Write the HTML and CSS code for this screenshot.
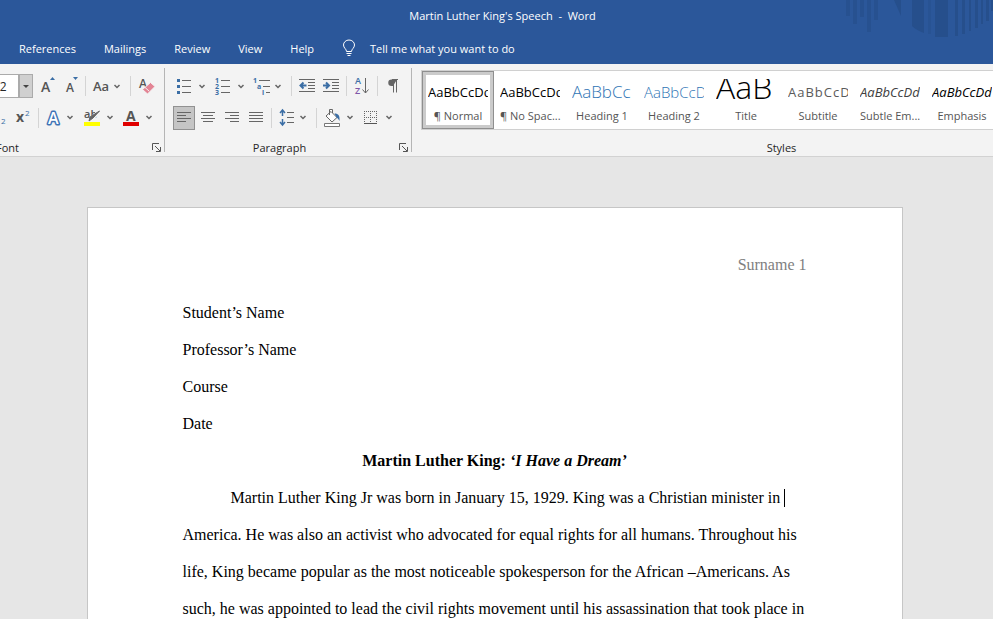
FILE: index.html
```html
<!DOCTYPE html>
<html lang="en">
<head>
    <meta charset="UTF-8">
    <meta name="viewport" content="width=device-width, initial-scale=1.0">
    <title>Martin Luther King's Speech - Word</title>
    <link rel="stylesheet" href="styles.css">
</head>
<body>
    <header class="title-bar">
        <svg class="title-art" width="150" height="40" viewBox="0 0 150 40" aria-hidden="true">
            <g fill="#264f8c">
                <path d="M3 0h4v16H3zM10 0h4v24h-4zM17 0h4v17h-4zM24 0h4v32h-4zM31 0h4v20h-4z" opacity=".7"/>
                <path d="M51 0h7v16z"/>
                <path d="M69 0h12v33q-8-3-12-7z"/>
                <path d="M85 0h3v34h-3z" opacity=".5"/>
                <path d="M92 0h13v37H92z"/>
                <path d="M112 0h3v36h-3zM119 0h3v34h-3zM126 0h2v31h-2zM132 0h3v28h-3zM138 0h2v24h-2zM143 0h3v21h-3zM148 0h2v11h-2z"/>
            </g>
        </svg>
        <div class="window-title">Martin Luther King's Speech&nbsp; -&nbsp; Word</div>
        <nav class="tabs">
            <a href="#">References</a>
            <a href="#">Mailings</a>
            <a href="#">Review</a>
            <a href="#">View</a>
            <a href="#">Help</a>
            <button class="tell-me" type="button">
                <svg width="14" height="18" viewBox="0 0 14 18" fill="none" stroke="#fff">
                    <path d="M4.5 12.500c0-2.500-3-3.500-3-6.500a5.500 5 0 0 1 11 0c0 3-3 4-3 6.500zM4.500 14.500h5M5.500 16.500h3"/>
                </svg>
                Tell me what you want to do
            </button>
        </nav>
    </header>

    <div class="ribbon">
        <section class="group group-font">
            <div class="row">
                <input class="size-input" type="text" value="12" aria-label="Font size">
                <button class="size-arrow" type="button" aria-label="Font size list">
                    <svg width="12" height="22"><path d="M3 10h6l-3 3z" fill="#444"/></svg>
                </button>
                <button class="tool" type="button" aria-label="Grow font">
                    <svg width="24" height="24"><text class="glyph" x="8" y="18" font-size="14">A</text><path d="M17 6l2.500-3 2.500 3z" fill="#3b6ea5"/></svg>
                </button>
                <button class="tool" type="button" aria-label="Shrink font">
                    <svg width="24" height="24"><text class="glyph" x="9" y="18" font-size="12">A</text><path d="M16 3h5l-2.500 3z" fill="#3b6ea5"/></svg>
                </button>
                <span class="sep"></span>
                <button class="tool" type="button" aria-label="Change case">
                    <svg width="36" height="24"><text class="glyph" x="3" y="17" font-size="13">Aa</text><path class="chev" d="M24.500 11l2.500 2.500 2.500-2.500"/></svg>
                </button>
                <span class="sep"></span>
                <button class="tool" type="button" aria-label="Clear formatting">
                    <svg width="24" height="24"><text class="glyph" x="4" y="14" font-size="12">A</text><path d="M15.500 8.500l4.500 4-7.500 7.500-5-4.500z" fill="#e38494" stroke="#f3f3f3"/><path d="M9.500 13l4.500 4" stroke="#f3f3f3"/></svg>
                </button>
            </div>
            <div class="row">
                <button class="tool" type="button" aria-label="Subscript">
                    <svg width="24" height="24"><text class="glyph bold" x="5" y="16" font-size="13">x</text><text x="15" y="18" font-size="8" fill="#3b6ea5">2</text></svg>
                </button>
                <button class="tool" type="button" aria-label="Superscript">
                    <svg width="24" height="24"><text class="glyph bold" x="6" y="16" font-size="14">x</text><text x="15" y="10" font-size="8" fill="#3b6ea5">2</text></svg>
                </button>
                <span class="sep"></span>
                <button class="tool" type="button" aria-label="Text effects">
                    <svg width="36" height="24"><text x="5" y="18" font-size="16" font-weight="600" fill="#fff" stroke="#3f74b5" stroke-width="3" stroke-linejoin="round" paint-order="stroke">A</text><path class="chev" d="M24.500 10l2.500 2.500 2.500-2.500"/></svg>
                </button>
                <button class="tool" type="button" aria-label="Highlight color">
                    <svg width="40" height="24"><text class="glyph" x="5" y="12" font-size="11">ab</text><path d="M20.500 5l-8 8" stroke="#f3f3f3" stroke-width="4"/><path d="M20.500 5l-6.500 7-4 3 1-4z" fill="#666" stroke="#666"/><path d="M5 16h16v4H5z" fill="#ff0"/><path class="chev" d="M28.500 10l2.500 2.500 2.500-2.500"/></svg>
                </button>
                <button class="tool" type="button" aria-label="Font color">
                    <svg width="36" height="24"><text class="glyph bold" x="7" y="15" font-size="14">A</text><path d="M4 16h16v4H4z" fill="#e00000"/><path class="chev" d="M27.500 10l2.500 2.500 2.500-2.500"/></svg>
                </button>
            </div>
            <footer class="group-footer">
                <span>Font</span>
                <button class="launcher" type="button" aria-label="Font settings">
                    <svg width="9" height="9" viewBox="0 0 9 9" fill="none" stroke="#555"><path d="M.5 7V.5H7M3 3l5 5M8.500 4v4.500H4"/></svg>
                </button>
            </footer>
        </section>

        <section class="group group-paragraph">
            <div class="row">
                <button class="tool" type="button" aria-label="Bullets">
                    <svg width="38" height="24"><path d="M4 5h3v3H4zM4 11h3v3H4zM4 17h3v3H4z" fill="#3b6ea5"/><path class="line" d="M9 6.500h9M9 12.500h9M9 18.500h9"/><path class="chev" d="M26.500 11l2.500 2.500 2.500-2.500"/></svg>
                </button>
                <button class="tool" type="button" aria-label="Numbering">
                    <svg width="38" height="24"><g class="tiny"><text x="4" y="9">1</text><text x="4" y="15">2</text><text x="4" y="21">3</text></g><path class="line" d="M10 6.500h9M10 12.500h9M10 18.500h9"/><path class="chev" d="M27.500 11l2.500 2.500 2.500-2.500"/></svg>
                </button>
                <button class="tool" type="button" aria-label="Multilevel list">
                    <svg width="38" height="24"><g class="tiny"><text x="4" y="9">1</text><text x="8" y="15">a</text><text x="13" y="21">i</text></g><path class="line" d="M10 6.500h11M14 12.500h7M17 18.500h4"/><path class="chev" d="M26.500 11l2.500 2.500 2.500-2.500"/></svg>
                </button>
                <span class="sep"></span>
                <button class="tool" type="button" aria-label="Decrease indent">
                    <svg width="23" height="24"><path class="line" d="M3 5.500h16M12 8.500h7M12 11.500h7M12 14.500h7M3 17.500h16"/><path d="M10.500 11.500H5M7.500 8.500l-3 3 3 3" fill="none" stroke="#3b6ea5" stroke-width="2"/></svg>
                </button>
                <button class="tool" type="button" aria-label="Increase indent">
                    <svg width="23" height="24"><path class="line" d="M4 5.500h16M13 8.500h7M13 11.500h7M13 14.500h7M4 17.500h16"/><path d="M4 11.500h6M7 8.500l3 3-3 3" fill="none" stroke="#3b6ea5" stroke-width="2"/></svg>
                </button>
                <span class="sep"></span>
                <button class="tool" type="button" aria-label="Sort">
                    <svg width="22" height="24"><text x="4" y="10" font-size="9" font-weight="600" fill="#3b6ea5">A</text><text x="4" y="20" font-size="9" font-weight="600" fill="#7e57a8">Z</text><path class="line" d="M14.500 4v15M11.500 15.500l3 3.500 3-3.500"/></svg>
                </button>
                <span class="sep"></span>
                <button class="tool" type="button" aria-label="Show paragraph marks">
                    <svg width="24" height="24"><path d="M15 5.500H9.500a3 3 0 0 0 0 6.500H11z" fill="#666"/><path d="M10 5.500h6M11.500 6v12.500M14.500 6v12.500" stroke="#666" fill="none"/></svg>
                </button>
            </div>
            <div class="row">
                <div class="align-set">
                    <button class="tool active" type="button" aria-label="Align left">
                        <svg width="20" height="22"><path class="line" d="M3 5.500h14M3 8.500h9M3 11.500h14M3 14.500h9"/></svg>
                    </button>
                    <button class="tool" type="button" aria-label="Center">
                        <svg width="22" height="24"><path class="line" d="M4 6.500h14M6 9.500h10M4 12.500h14M6 15.500h10"/></svg>
                    </button>
                    <button class="tool" type="button" aria-label="Align right">
                        <svg width="22" height="24"><path class="line" d="M4 6.500h14M9 9.500h9M4 12.500h14M9 15.500h9"/></svg>
                    </button>
                    <button class="tool" type="button" aria-label="Justify">
                        <svg width="22" height="24"><path class="line" d="M4 6.500h14M4 9.500h14M4 12.500h14M4 15.500h14"/></svg>
                    </button>
                </div>
                <span class="sep"></span>
                <button class="tool" type="button" aria-label="Line spacing">
                    <svg width="36" height="24"><path d="M6.500 4v6M6.500 13v6M4 7l2.500-3L9 7M4 16l2.500 3L9 16" fill="none" stroke="#3b6ea5" stroke-width="1.500"/><path class="line" d="M11 6.500h7M11 11.500h7M11 16.500h7"/><path class="chev" d="M24.500 10l2.500 2.500 2.500-2.500"/></svg>
                </button>
                <span class="sep"></span>
                <button class="tool" type="button" aria-label="Shading">
                    <svg width="36" height="24"><path d="M10 5.500l6 6-5 4.500-6-6zM8.500 9V3.500h3V7" fill="#fff" stroke="#666"/><path d="M13.500 7.500c4 0 5.500 2 5 7.500-1-2-2-3-3-3.500z" fill="#3b6ea5"/><path d="M3.500 17.500h15v3h-15z" fill="#fff" stroke="#777"/><path class="chev" d="M26.500 10l2.500 2.500 2.500-2.500"/></svg>
                </button>
                <button class="tool" type="button" aria-label="Borders">
                    <svg width="40" height="24"><path d="M7 5.500h13M7 11.500h13M7.500 5v13M13.500 5v13M19.500 5v13" stroke="#666" stroke-dasharray="1 1"/><path d="M7 17.500h13" stroke="#555"/><path class="chev" d="M29.500 10l2.500 2.500 2.500-2.500"/></svg>
                </button>
            </div>
            <footer class="group-footer">
                <span>Paragraph</span>
                <button class="launcher" type="button" aria-label="Paragraph settings">
                    <svg width="9" height="9" viewBox="0 0 9 9" fill="none" stroke="#555"><path d="M.5 7V.5H7M3 3l5 5M8.500 4v4.500H4"/></svg>
                </button>
            </footer>
        </section>

        <section class="group group-styles">
            <div class="gallery">
                <button class="style-card selected" type="button"><span class="preview">AaBbCcDd</span><span class="style-name">¶ Normal</span></button>
                <button class="style-card" type="button"><span class="preview">AaBbCcDd</span><span class="style-name">¶ No Spac...</span></button>
                <button class="style-card" type="button"><span class="preview heading-1">AaBbCc</span><span class="style-name">Heading 1</span></button>
                <button class="style-card" type="button"><span class="preview heading-2">AaBbCcD</span><span class="style-name">Heading 2</span></button>
                <button class="style-card" type="button"><span class="preview title">AaB</span><span class="style-name">Title</span></button>
                <button class="style-card" type="button"><span class="preview subtitle">AaBbCcD</span><span class="style-name">Subtitle</span></button>
                <button class="style-card" type="button"><span class="preview subtle">AaBbCcDd</span><span class="style-name">Subtle Em...</span></button>
                <button class="style-card" type="button"><span class="preview emphasis">AaBbCcDd</span><span class="style-name">Emphasis</span></button>
            </div>
            <footer class="group-footer"><span>Styles</span></footer>
        </section>
    </div>

    <main class="workspace">
        <article class="page">
            <div class="page-header">Surname 1</div>
            <p>Student’s Name</p>
            <p>Professor’s Name</p>
            <p>Course</p>
            <p>Date</p>
            <h1>Martin Luther King: <em>‘I Have a Dream’</em></h1>
            <p class="indent">Martin Luther King Jr was born in January 15, 1929. King was a Christian minister in <span class="caret"></span> America. He was also an activist who advocated for equal rights for all humans. Throughout his life, King became popular as the most noticeable spokesperson for the African –Americans. As such, he was appointed to lead the civil rights movement until his assassination that took place in</p>
        </article>
    </main>
</body>
</html>
```
FILE: styles.css
```css
* { box-sizing: border-box; }
body { margin: 0; height: 100vh; display: flex; flex-direction: column; overflow: hidden; background: #e6e6e6; font-family: "Open Sans", "Noto Sans", sans-serif; font-size: 11px; color: #262626; }
button { margin: 0; padding: 0; border: none; background: none; font: inherit; color: inherit; cursor: pointer; }
svg { display: block; }

/* title bar and tabs */
.title-bar { position: relative; height: 64px; flex: none; background: #2b579a; color: #fff; }
.title-art { position: absolute; top: 0; right: 0; }
.window-title { height: 32px; line-height: 32px; padding-left: 12px; text-align: center; }
.tabs { display: flex; align-items: center; gap: 28px; height: 32px; padding-left: 19px; }
.tabs a { color: #fff; text-decoration: none; }
.tell-me { display: flex; align-items: center; gap: 14px; }

/* ribbon */
.ribbon { display: flex; flex: none; height: 93px; padding: 4px 0; background: #f3f3f3; border-bottom: 1px solid #d2d2d2; overflow: hidden; }
.group { display: flex; flex-direction: column; flex: none; border-right: 1px solid #b5b5b5; padding-top: 6px; }
.group-font { width: 297px; margin-left: -132px; }
.group-font .row { padding-left: 118px; }
.group-paragraph { width: 247px; }
.group-paragraph .row { padding-left: 8px; }
.group-styles { width: 757px; padding-top: 2px; }
.row { display: flex; align-items: center; height: 24px; margin-bottom: 8px; }
.sep { flex: none; width: 1px; height: 20px; margin: 0 4px; background: #d4d4d4; }
.tool { flex: none; }
.tool.active { border: 1px solid #919191; background: #c5c5c5; }
.align-set { display: flex; gap: 2px; }
.size-input { width: 33px; height: 24px; padding: 0 0 0 6px; border: 1px solid #ababab; background: #fff; font: inherit; font-size: 12px; color: #262626; }
.size-arrow { width: 14px; height: 24px; border: 1px solid #ababab; background: #d0d0d0; }
.group-footer { display: flex; align-items: center; height: 16px; margin-top: auto; margin-bottom: -3px; }
.group-footer span { flex: 1; text-align: center; }
.launcher { width: 17px; padding-left: 5px; }
.group-styles .group-footer { padding-right: 17px; }

.glyph { fill: #555; font-weight: 600; }
.glyph.bold { font-weight: 700; }
.tiny { fill: #3b6ea5; font-size: 7px; font-weight: 700; }
.line { fill: none; stroke: #666; }
.chev { fill: none; stroke: #666; stroke-width: 1.5; }

/* style gallery */
.gallery { display: flex; height: 60px; margin-left: 9px; background: #fff; border: 1px solid #d0d0d0; }
.style-card { display: flex; flex-direction: column; flex: none; width: 72px; padding: 8px 6px 0; }
.style-card.selected { border: 1px solid #8f8f8f; box-shadow: inset 0 0 0 3px #cbcbcb; padding: 7px 5px 0; }
.preview { width: 60px; height: 29px; line-height: 26px; overflow: hidden; white-space: nowrap; text-align: left; font-size: 13px; color: #000; }
.style-name { width: 60px; line-height: 16px; text-align: center; white-space: nowrap; color: #555; }
.heading-1 { font-size: 17px; font-weight: 300; color: #2e74b5; }
.heading-2 { font-size: 15px; font-weight: 300; color: #2e74b5; }
.title { font-size: 32px; font-weight: 300; line-height: 16px; }
.subtitle { color: #5a5a5a; letter-spacing: 1px; }
.subtle { font-style: italic; color: #404040; }
.emphasis { font-style: italic; }

/* document */
.workspace { flex: 1; min-height: 0; padding: 50px 4px 0 0; overflow: hidden; }
.page { max-width: 816px; min-height: 1056px; margin: 0 auto; padding: 47px 95px; background: #fff; border: 1px solid #c6c6c6; font-family: "Liberation Serif", "Times New Roman", serif; font-size: 16px; line-height: 37px; color: #000; }
.page p, .page h1 { margin: 0; }
.page h1 { font-size: 16px; text-align: center; }
.page-header { line-height: 20px; margin-bottom: 19px; text-align: right; color: #7f7f7f; }
.indent { text-indent: 48px; }
.caret { display: inline-block; width: 1px; height: 18px; vertical-align: -4px; background: #000; }
```
